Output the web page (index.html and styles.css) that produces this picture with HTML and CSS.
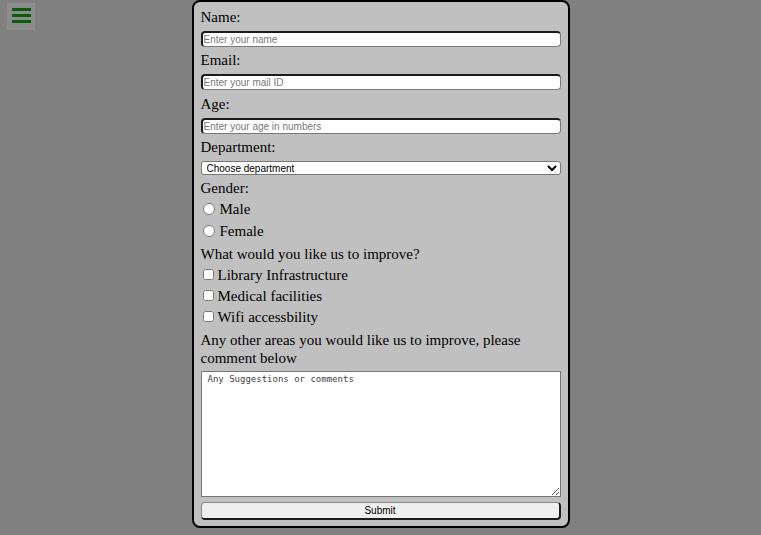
FILE: index.html
```html
<!DOCTYPE html>
<html lang="en">
<head>
<meta charset="utf-8">
<title>Feedback Form</title>
<link rel="stylesheet" href="styles.css">
</head>
<body>
<div class="menu-btn" aria-label="Menu">
  <span class="bar"></span>
  <span class="bar"></span>
  <span class="bar"></span>
</div>
<form class="form">
  <label class="lbl" for="name">Name:</label>
  <input class="txt" id="name" type="text" placeholder="Enter your name">
  <label class="lbl" for="email">Email:</label>
  <input class="txt" id="email" type="text" placeholder="Enter your mail ID">
  <label class="lbl lbl-age" for="age">Age:</label>
  <input class="txt" id="age" type="text" placeholder="Enter your age in numbers">
  <label class="lbl" for="dept">Department:</label>
  <select class="sel" id="dept">
    <option>Choose department</option>
  </select>
  <div class="lbl lbl-gender">Gender:</div>
  <label class="opt radio-opt"><input type="radio" name="g"><span>Male</span></label>
  <label class="opt radio-opt"><input type="radio" name="g"><span>Female</span></label>
  <div class="lbl lbl-improve">What would you like us to improve?</div>
  <label class="opt check-opt"><input type="checkbox"><span>Library Infrastructure</span></label>
  <label class="opt check-opt"><input type="checkbox"><span>Medical facilities</span></label>
  <label class="opt check-opt"><input type="checkbox"><span>Wifi accessbility</span></label>
  <label class="lbl lbl-other" for="comments">Any other areas you would like us to improve, please comment below</label>
  <textarea class="area" id="comments" placeholder="Any Suggestions or comments"></textarea>
  <button class="submit" type="button">Submit</button>
</form>
</body>
</html>
```

FILE: styles.css
```css
html, body {
  margin: 0;
  padding: 0;
}
body {
  background: #808080;
  font-family: "Liberation Serif", "Times New Roman", serif;
  font-size: 15px;
  color: #000;
  min-height: 535px;
}
.menu-btn {
  position: absolute;
  left: 7px;
  top: 3px;
  width: 28px;
  height: 27px;
  background: #8c8c8c;
  display: flex;
  flex-direction: column;
  align-items: center;
  padding-top: 5px;
  box-sizing: border-box;
  gap: 3px;
}
.bar {
  display: block;
  width: 19px;
  height: 3px;
  background: #0a5e0a;
}
.form {
  width: 360px;
  margin: 0 auto;
  background: #c0c0c0;
  border: 2px solid #000;
  border-radius: 8px;
  padding: 6px 7px 6px 7px;
  display: flex;
  flex-direction: column;
}
.lbl {
  display: block;
  line-height: 18px;
  height: 18px;
}
.lbl-age { margin-top: 1px; }
.txt {
  box-sizing: border-box;
  width: 360px;
  height: 16px;
  margin: 5px 0 4px 0;
  padding: 0 1px;
  border-style: solid;
  border-width: 2px 1px 1px 2px;
  border-color: #1c1c1c #7a7a7a #7a7a7a #1c1c1c;
  border-radius: 4px;
  background: #fff;
  font-family: "Liberation Sans", Arial, sans-serif;
  font-size: 10px;
}
.txt::placeholder {
  color: #7a7a7a;
}
.sel {
  box-sizing: border-box;
  width: 360px;
  height: 14px;
  margin: 5px 0 4px 0;
  padding: 0 1px;
  border: 1px solid #767676;
  border-radius: 3px;
  background: #fff;
  font-family: "Liberation Sans", Arial, sans-serif;
  font-size: 10px;
  color: #000;
}
.opt {
  display: flex;
  align-items: center;
  line-height: 18px;
}
.radio-opt { height: 22px; }
.check-opt { height: 21px; }
.lbl-gender { margin-bottom: 1px; }
.lbl-improve { margin-top: 3px; margin-bottom: 1px; }
.opt input {
  margin: 0 5px 0 2px;
  width: 12px;
  height: 12px;
}
.check-opt input {
  margin: 0 4px 0 2px;
  width: 11px;
  height: 11px;
}
.lbl-other {
  height: auto;
  margin-top: 4px;
}
.area {
  box-sizing: border-box;
  width: 360px;
  height: 126px;
  margin: 4px 0 5px 0;
  padding: 2px 6px;
  border: 1px solid #767676;
  background: #fff;
  font-family: "DejaVu Sans Mono", "Liberation Mono", monospace;
  font-size: 9px;
  resize: vertical;
}
.area::placeholder {
  color: #444;
}
.submit {
  box-sizing: border-box;
  width: 360px;
  height: 18px;
  margin: 0;
  padding: 0;
  background: #efefef;
  border-style: solid;
  border-width: 1px 2px 2px 1px;
  border-color: #8a8a8a #1c1c1c #1c1c1c #8a8a8a;
  border-radius: 4px;
  font-family: "Liberation Sans", Arial, sans-serif;
  font-size: 10px;
  color: #000;
  line-height: 14px;
}
```
